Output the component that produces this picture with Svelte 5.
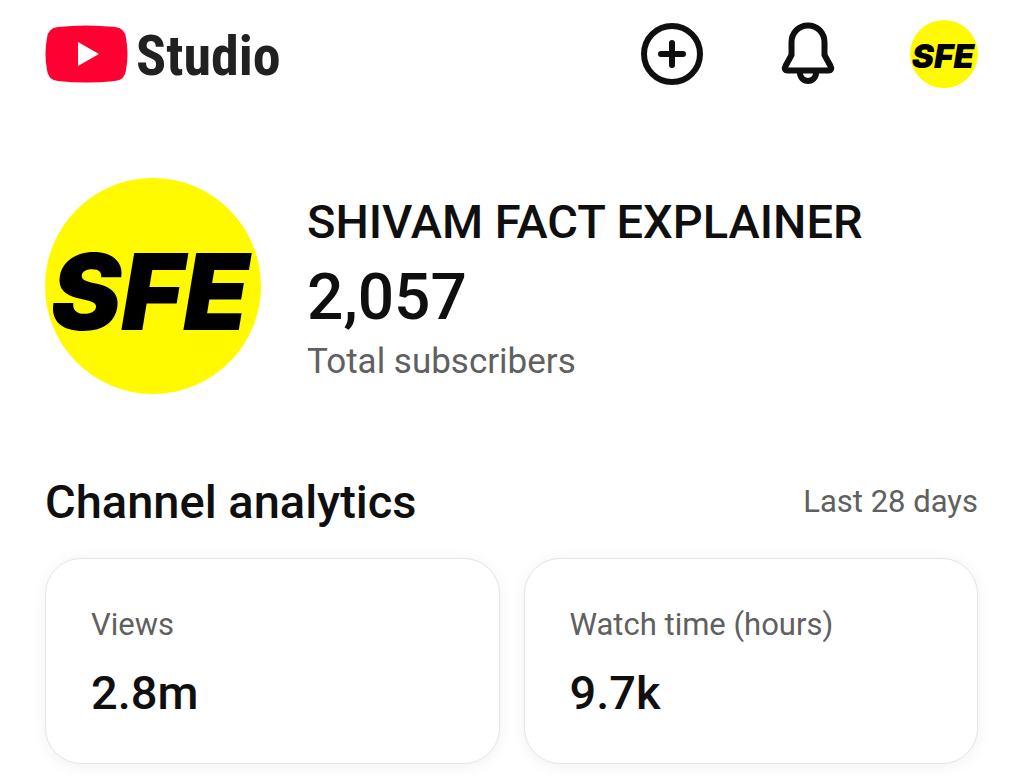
<script lang="ts">
  const channel = {
    name: 'SHIVAM FACT EXPLAINER',
    initials: 'SFE',
    subscribers: '2,057',
  };

  const metrics = [
    { label: 'Views', value: '2.8m' },
    { label: 'Watch time (hours)', value: '9.7k' },
  ];
</script>

{#snippet avatar()}
  <svg class="avatar" viewBox="0 0 216 216" aria-hidden="true">
    <circle cx="108" cy="108" r="108" fill="#fffa00" />
    <text x="105" y="152" text-anchor="middle">{channel.initials}</text>
  </svg>
{/snippet}

<div class="studio">
  <header>
    <a class="logo" href="/" aria-label="Studio home">
      <svg viewBox="0 0 83 58" aria-hidden="true">
        <path
          d="M13 2Q41-1 70 2Q80 3 81 13Q84 29 81 45Q80 55 70 56Q41 59 13 56Q3 55 2 45Q-1 29 2 13Q3 3 13 2Z"
          fill="#ff0033"
        />
        <path d="M33 17L54 29L33 41Z" fill="#fff" />
      </svg>
      <span>Studio</span>
    </a>
    <div class="actions">
      <button type="button" aria-label="Create">
        <svg viewBox="0 0 68 68" aria-hidden="true">
          <circle cx="34" cy="34" r="28" />
          <path d="M34 23V45M23 34H45" />
        </svg>
      </button>
      <button type="button" aria-label="Notifications">
        <svg viewBox="0 0 68 68" aria-hidden="true">
          <path
            d="M34 5.5C24.5 5.5 17.5 13 17.5 22.5V35L11.5 46C10 48.5 11 50.5 13.5 50.5H54.5C57 50.5 58 48.5 56.5 46L50.5 35V22.5C50.5 13 43.5 5.5 34 5.5Z"
          />
          <path d="M26 51V53A8 8 0 0 0 42 53V51" />
        </svg>
      </button>
      <button type="button" aria-label="Account">
        {@render avatar()}
      </button>
    </div>
  </header>

  <main>
    <section class="profile">
      <div class="picture">{@render avatar()}</div>
      <div class="details">
        <h1>{channel.name}</h1>
        <p class="count">{channel.subscribers}</p>
        <p class="caption">Total subscribers</p>
      </div>
    </section>

    <section class="analytics">
      <div class="heading">
        <h2>Channel analytics</h2>
        <span>Last 28 days</span>
      </div>
      <div class="cards">
        {#each metrics as metric (metric.label)}
          <article class="card">
            <h3>{metric.label}</h3>
            <p>{metric.value}</p>
          </article>
        {/each}
      </div>
    </section>
  </main>
</div>

<style>
  :global(body) {
    background: #fff;
  }

  .studio {
    padding: 20px 46px 20px 45px;
    font-family: Roboto, 'Liberation Sans', sans-serif;
    color: #0f0f0f;
  }

  h1,
  h2,
  h3,
  p {
    margin: 0;
  }

  header {
    display: flex;
    align-items: center;
    justify-content: space-between;
  }

  .logo {
    display: flex;
    align-items: center;
    gap: 8px;
    color: #212121;
    text-decoration: none;
  }

  .logo svg {
    width: 83px;
    height: 58px;
  }

  .logo span {
    padding-top: 4px;
    font-family: 'Roboto Condensed', 'Liberation Sans Narrow', 'Liberation Sans', sans-serif;
    font-size: 56px;
    font-weight: 700;
    line-height: 64px;
  }

  .actions {
    display: flex;
    gap: 68px;
  }

  .actions button {
    width: 68px;
    height: 68px;
    padding: 0;
    border: none;
    border-radius: 50%;
    background: none;
    cursor: pointer;
  }

  .actions svg {
    display: block;
    width: 100%;
    fill: none;
    stroke: #0f0f0f;
    stroke-width: 6;
    stroke-linecap: round;
    stroke-linejoin: round;
  }

  .avatar {
    display: block;
    width: 100%;
  }

  .avatar text {
    font-family: Inter, sans-serif;
    font-size: 106px;
    font-style: italic;
    font-weight: 900;
    fill: #000;
    stroke: none;
  }

  .actions .avatar {
    stroke: none;
  }

  .profile {
    display: flex;
    align-items: center;
    gap: 46px;
    margin-top: 90px;
  }

  .picture {
    flex: none;
    width: 216px;
  }

  h1,
  h2 {
    font-size: 47px;
    font-weight: 500;
    line-height: 64px;
  }

  .count {
    font-size: 64px;
    font-weight: 500;
    line-height: 88px;
  }

  .caption {
    font-size: 35px;
    line-height: 40px;
    color: #606060;
  }

  .analytics {
    margin-top: 76px;
  }

  .heading {
    display: flex;
    align-items: center;
    justify-content: space-between;
  }

  .heading span {
    font-size: 31px;
    line-height: 44px;
    color: #606060;
  }

  .cards {
    display: grid;
    grid-template-columns: 1fr 1fr;
    gap: 24px;
    margin-top: 24px;
  }

  .card {
    padding: 44px 45px 40px;
    border: 1px solid #e5e5e5;
    border-radius: 36px;
    background: #fff;
    box-shadow: 0 2px 16px rgba(0, 0, 0, 0.06);
  }

  .card h3 {
    font-size: 31px;
    font-weight: 400;
    line-height: 44px;
    color: #606060;
  }

  .card p {
    margin-top: 16px;
    font-size: 47px;
    font-weight: 500;
    line-height: 60px;
  }
</style>
